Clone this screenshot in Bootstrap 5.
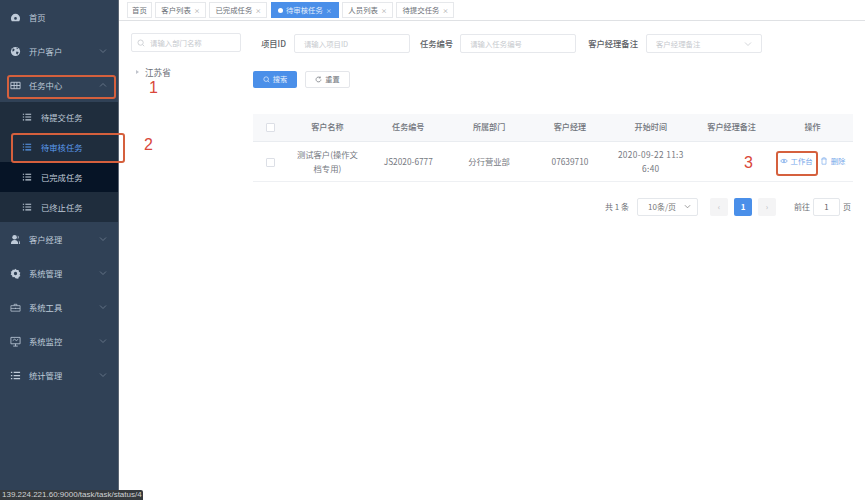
<!DOCTYPE html>
<html lang="zh"><head><meta charset="utf-8"><title>任务中心</title>
<link href="https://cdn.jsdelivr.net/npm/bootstrap@5.3.0/dist/css/bootstrap.min.css" rel="stylesheet">
<style>
html,body{height:500px;overflow:hidden}
body{font-family:"Noto Sans CJK SC","Liberation Sans",sans-serif;font-size:8.3px;color:#606266;background:#fff;position:relative}
.app{height:500px}
.side{width:119px;background:#304156;border-right:1px solid #5c6673;flex:none;color:#bfcbd9}
.mi{height:34px;padding-left:10px;gap:8px}
.mi svg,.si svg{flex:none}
.mi .chev{margin-left:auto;margin-right:11px;color:#6f7e90}
.sub{background:#1f2d3d;height:120px}
.si{height:30px;padding-left:22px;gap:9px}
.si.active{color:#5b9bee}
.si.hover{background:#061426;color:#c3cfdc}
.top{height:21px;border-bottom:1px solid #dfe1e4;padding:2px 8px;gap:3.5px}
.tg{height:16px;border:1px solid #e6e8eb;color:#6b6f76;padding:0 5px;font-size:7.4px;gap:3px;white-space:nowrap}
.tg:first-child{padding:0 4px}
.tg small{font-size:6px;color:#999}
.tg.on{background:#4a8fe9;border-color:#4a8fe9;color:#e4eefb;padding:0 6px}
.tg.on small{color:#dce9fb}
.tg i{width:5px;height:5px;border-radius:50%;background:#fff;display:block}
.deptcol{width:134px;flex:none;padding:12px 0 0 12px}
.box{height:19px;border:1px solid #e6e8ec;border-radius:2px;color:#c6c9ce;font-size:7.4px;padding:0 9px;background:#fff;display:flex;align-items:center}
.dept{width:110px;gap:5px;padding:0 5px}
.tree{margin:14px 0 0 5px;gap:6px;color:#6a6e75;font-size:8.6px}
.tree b{width:0;height:0;border-left:3px solid #c0c4cc;border-top:2px solid transparent;border-bottom:2px solid transparent}
.rightcol{width:600px;padding-top:13px;flex:none}
.fm{height:19px}
.fm label{font-weight:500;color:#5b5e64;font-size:8.3px;white-space:nowrap}
.w116{width:116px}
.lb1{margin-left:8px}.in1{margin-left:8px}
.lb2{margin-left:10px}.lb3{margin-left:12px}.in2{margin-left:7px}.in3{margin-left:8px}
.btns{margin-top:18px;gap:8px}
.bt{height:17px;font-size:7.2px;padding:0;border-radius:2px;gap:3px;line-height:1}
.bt-p{width:44px;background:#4a8fe9;color:#e8f1fc;border:0}
.bt-d{width:45px;background:#fff;color:#70747b;border:1px solid #e4e6ea}
.tbl{margin:26px 0 0;table-layout:fixed;width:600px;--bs-table-bg:transparent;--bs-table-color:#6d7178;font-size:8.3px;text-align:center}
.tbl th{background:#f7f8fa;height:27px;font-weight:500;color:#70747a;padding:0;vertical-align:middle;border-bottom:1px solid #e9ecf0;font-size:8.1px}
.tbl td{height:40px;padding:0 6px;vertical-align:middle;border-bottom:1px solid #eef0f3;line-height:14px;color:#76797f}
.tbl .c0{width:34px}
.tbl .time{letter-spacing:.35px;padding:0}
.ck{width:9px;height:9px;border:1px solid #dcdfe6;border-radius:1px;background:#fff;display:inline-block;vertical-align:middle}
.acts{color:#76a7ea;font-size:7.4px;gap:3px;white-space:nowrap}
.pg{margin-top:16px;height:18px;padding-right:2px;color:#6d7076;font-size:8px}
.sel{height:18px;width:61px;border:1px solid #e4e7eb;border-radius:2px;padding:0 6px 0 10px;color:#777;margin:0 12px 0 8px;font-size:8px}
.pb{width:18px;height:18px;background:#f4f4f5;border-radius:2px;color:#b8bbc1;margin-right:6px;font-size:8px}
.pb.on{background:#4a8fe9;color:#fff;font-weight:700}
.go{width:27px;height:18px;border:1px solid #e4e7eb;border-radius:2px;margin:0 3px;color:#666}
.callout{position:absolute;border:2px solid #d5603d;border-radius:3px}
.c1{left:7px;top:75px;width:109px;height:24px}
.c2{left:11px;top:133px;width:114px;height:30px}
.c3{left:776px;top:151px;width:42px;height:25px}
.num{position:absolute;color:#d9473a;font:300 16px/16px "Liberation Sans",sans-serif}
.n1{left:149px;top:80px}.n2{left:144px;top:137px}.n3{left:744px;top:155px}
.status{position:absolute;left:0;bottom:0;height:10px;width:143px;background:#35393d;color:#cfd2d5;font:8px/10px "Liberation Sans",sans-serif;padding-left:2px;white-space:nowrap;overflow:hidden;border-top-right-radius:2px}
</style></head><body>
<svg width="0" height="0" class="d-none"><defs>
<symbol id="home" viewBox="0 0 12 12"><path fill="currentColor" d="M6 2a5 5 0 0 0-5 5c0 1.200.4 2.100 1 3h8c.6-.9 1-1.800 1-3a5 5 0 0 0-5-5zm0 3.500a1.500 1.500 0 1 1 0 3 1.500 1.500 0 0 1 0-3z"/></symbol>
<symbol id="globe" viewBox="0 0 12 12"><circle cx="6" cy="6" r="5" fill="currentColor"/><path fill="#304156" d="M3 2.500l2 1-.5 2-2 .5zM7 6l2.500.5L8 9.500 6.500 8zM7 1.500l2 1-1.500 1z"/></symbol>
<symbol id="grid" viewBox="0 0 12 12"><path fill="none" stroke="currentColor" d="M1 2.500h10v7H1zM1 6h10M4.500 2.500v7M7.500 2.500v7"/></symbol>
<symbol id="list" viewBox="0 0 12 12"><path fill="currentColor" d="M1 2h1.500v1.300H1zM4 2h7v1.300H4zM1 5.400h1.500v1.300H1zM4 5.400h7v1.300H4zM1 8.800h1.500v1.300H1zM4 8.800h7v1.300H4z"/></symbol>
<symbol id="user" viewBox="0 0 12 12"><circle cx="5" cy="3.500" r="2.500" fill="currentColor"/><path fill="currentColor" d="M1 11c0-3 1.500-4.500 4-4.500S9 8 9 11zM8.500 1.500a2.500 2.500 0 0 1 0 4zM9.500 7c1 .6 1.500 2 1.500 4h-1c0-1.500-.2-3-.5-4z"/></symbol>
<symbol id="gear" viewBox="0 0 12 12"><path fill="currentColor" fill-rule="evenodd" d="M6 .8l1.300 1.400 2-.1.5 1.900 1.500 1.200-.8 1.800.8 1.800-1.700 1-.6 1.800-1.900-.2L6 11.200l-1.200-1.400-2 .2-.5-1.800L.7 7.200l.8-1.800-.8-1.200 1.600-1 .5-1.300 2 .1zM6 4.200a1.800 1.800 0 1 0 0 3.600 1.800 1.800 0 0 0 0-3.600z"/></symbol>
<symbol id="tool" viewBox="0 0 12 12"><path fill="none" stroke="currentColor" stroke-width=".8" d="M1 4h10v6H1zM4.500 4V2.500h3V4M1 7h10M6 6.300v1.400"/></symbol>
<symbol id="monitor" viewBox="0 0 12 12"><path fill="none" stroke="currentColor" stroke-width=".9" d="M1 1.500h10v7H1zM6 8.500V11M3.500 11h5M3 5l2-1.500L7 5l2-1.500"/></symbol>
<symbol id="down" viewBox="0 0 8 8"><path fill="none" stroke="currentColor" stroke-width=".8" d="M1 2.500l3 3 3-3"/></symbol>
<symbol id="up" viewBox="0 0 8 8"><path fill="none" stroke="currentColor" stroke-width=".8" d="M1 5.500l3-3 3 3"/></symbol>
<symbol id="search" viewBox="0 0 10 10"><circle cx="4.500" cy="4.500" r="3.300" fill="none" stroke="currentColor"/><path stroke="currentColor" d="M7 7l2 2"/></symbol>
<symbol id="refresh" viewBox="0 0 10 10"><path fill="none" stroke="currentColor" d="M8.500 5A3.500 3.500 0 1 1 7.400 2.400M7.500 .8v2H5.500"/></symbol>
<symbol id="eye" viewBox="0 0 10 10"><path fill="none" stroke="currentColor" d="M.7 5C2.500 2.300 7.500 2.300 9.300 5 7.500 7.700 2.500 7.700.7 5z"/><circle cx="5" cy="5" r="1.100" fill="currentColor"/></symbol>
<symbol id="trash" viewBox="0 0 10 10"><path fill="none" stroke="currentColor" stroke-width=".8" d="M1.500 2.500h7M3.500 2.500V1h3v1.500M2.500 2.500V9h5V2.500"/></symbol>
</defs></svg>

<div class="app d-flex">
<nav class="side">
 <div class="mi d-flex align-items-center"><svg width="11" height="11"><use href="#home"/></svg>首页</div>
 <div class="mi d-flex align-items-center"><svg width="11" height="11"><use href="#globe"/></svg>开户客户<svg class="chev" width="8" height="8"><use href="#down"/></svg></div>
 <div class="mi d-flex align-items-center"><svg width="11" height="11"><use href="#grid"/></svg>任务中心<svg class="chev" width="8" height="8"><use href="#up"/></svg></div>
 <div class="sub">
  <div class="si d-flex align-items-center"><svg width="10" height="10"><use href="#list"/></svg>待提交任务</div>
  <div class="si active d-flex align-items-center"><svg width="10" height="10"><use href="#list"/></svg>待审核任务</div>
  <div class="si hover d-flex align-items-center"><svg width="10" height="10"><use href="#list"/></svg>已完成任务</div>
  <div class="si d-flex align-items-center"><svg width="10" height="10"><use href="#list"/></svg>已终止任务</div>
 </div>
 <div class="mi d-flex align-items-center"><svg width="11" height="11"><use href="#user"/></svg>客户经理<svg class="chev" width="8" height="8"><use href="#down"/></svg></div>
 <div class="mi d-flex align-items-center"><svg width="11" height="11"><use href="#gear"/></svg>系统管理<svg class="chev" width="8" height="8"><use href="#down"/></svg></div>
 <div class="mi d-flex align-items-center"><svg width="11" height="11"><use href="#tool"/></svg>系统工具<svg class="chev" width="8" height="8"><use href="#down"/></svg></div>
 <div class="mi d-flex align-items-center"><svg width="11" height="11"><use href="#monitor"/></svg>系统监控<svg class="chev" width="8" height="8"><use href="#down"/></svg></div>
 <div class="mi d-flex align-items-center"><svg width="11" height="11"><use href="#list"/></svg>统计管理<svg class="chev" width="8" height="8"><use href="#down"/></svg></div>
</nav>
<main class="flex-grow-1">
 <div class="top d-flex">
  <span class="tg d-flex align-items-center">首页</span>
  <span class="tg d-flex align-items-center">客户列表<small>×</small></span>
  <span class="tg d-flex align-items-center">已完成任务<small>×</small></span>
  <span class="tg on d-flex align-items-center"><i></i>待审核任务<small>×</small></span>
  <span class="tg d-flex align-items-center">人员列表<small>×</small></span>
  <span class="tg d-flex align-items-center">待提交任务<small>×</small></span>
 </div>
 <div class="d-flex">
  <div class="deptcol">
   <div class="box dept"><svg width="8" height="8"><use href="#search"/></svg>请输入部门名称</div>
   <div class="tree d-flex align-items-center"><b></b>江苏省</div>
  </div>
  <div class="rightcol">
   <div class="fm d-flex align-items-center">
    <label class="lb1">项目ID</label><div class="box w116 in1">请输入项目ID</div>
    <label class="lb2">任务编号</label><div class="box w116 in2">请输入任务编号</div>
    <label class="lb3">客户经理备注</label>
    <div class="box w116 in3">客户经理备注<svg class="ms-auto" width="8" height="8"><use href="#down"/></svg></div>
   </div>
   <div class="btns d-flex">
    <button class="btn bt bt-p d-flex align-items-center justify-content-center"><svg width="7" height="7"><use href="#search"/></svg>搜索</button>
    <button class="btn bt bt-d d-flex align-items-center justify-content-center"><svg width="7" height="7"><use href="#refresh"/></svg>重置</button>
   </div>
   <table class="table tbl">
    <thead><tr><th class="c0"><span class="ck"></span></th><th>客户名称</th><th>任务编号</th><th>所属部门</th><th>客户经理</th><th>开始时间</th><th>客户经理备注</th><th>操作</th></tr></thead>
    <tbody><tr><td class="px-0"><span class="ck"></span></td><td>测试客户(操作文档专用)</td><td class="px-0">JS2020-6777</td><td>分行营业部</td><td>07639710</td><td class="time">2020-09-22 11:3<br>6:40</td><td></td>
    <td class="px-0"><div class="acts d-flex justify-content-center align-items-center"><svg width="8" height="8"><use href="#eye"/></svg>工作台<svg class="ms-1" width="8" height="8"><use href="#trash"/></svg>删除</div></td></tr></tbody>
   </table>
   <div class="pg d-flex align-items-center justify-content-end">
    <span>共 1 条</span>
    <div class="sel d-flex align-items-center justify-content-between">10条/页<svg width="7" height="7"><use href="#down"/></svg></div>
    <span class="pb d-flex align-items-center justify-content-center">‹</span>
    <span class="pb on d-flex align-items-center justify-content-center">1</span>
    <span class="pb d-flex align-items-center justify-content-center">›</span>
    <span class="ms-2 ps-1">前往</span>
    <span class="go d-flex align-items-center justify-content-center">1</span>
    <span>页</span>
   </div>
  </div>
 </div>
</main>
</div>
<div class="callout c1"></div>
<div class="callout c2"></div>
<div class="callout c3"></div>
<span class="num n1">1</span>
<span class="num n2">2</span>
<span class="num n3">3</span>
<div class="status">139.224.221.60:9000/task/task/status/4</div>
</body></html>
